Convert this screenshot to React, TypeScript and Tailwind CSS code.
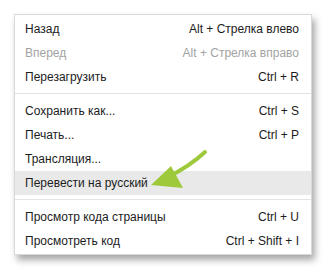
type Item = { label: string; shortcut?: string; disabled?: boolean; active?: boolean };

const groups: Item[][] = [
  [
    { label: "Назад", shortcut: "Alt + Стрелка влево" },
    { label: "Вперед", shortcut: "Alt + Стрелка вправо", disabled: true },
    { label: "Перезагрузить", shortcut: "Ctrl + R" },
  ],
  [
    { label: "Сохранить как...", shortcut: "Ctrl + S" },
    { label: "Печать...", shortcut: "Ctrl + P" },
    { label: "Трансляция..." },
    { label: "Перевести на русский", active: true },
  ],
  [
    { label: "Просмотр кода страницы", shortcut: "Ctrl + U" },
    { label: "Просмотреть код", shortcut: "Ctrl + Shift + I" },
  ],
];

const Row = ({ item }: { item: Item }) => (
  <div
    className={
      "flex h-6 items-center justify-between pl-[10px] pr-[12px] " +
      (item.active ? "bg-[#e9e9e9] " : "") +
      (item.disabled ? "text-[#a3a3a3]" : "text-[#1c1c1c]")
    }
  >
    <span>{item.label}</span>
    {item.shortcut && <span>{item.shortcut}</span>}
  </div>
);

const Arrow = () => (
  <svg className="pointer-events-none absolute left-0 top-0" width="326" height="271">
    <path
      d="M205 152 Q190 166 168 177"
      fill="none"
      stroke="#9dc93b"
      strokeWidth="4"
      strokeLinecap="round"
    />
    <polygon points="151,185 171,166 183,188" fill="#9dc93b" />
  </svg>
);

export default function App() {
  return (
    <div
      className="relative h-[271px] w-[326px] bg-white pl-[14px] pt-[14px]"
      style={{ fontFamily: '"Liberation Sans", Arial, sans-serif' }}
    >
      <div className="w-[298px] border border-[#d9d9d9] bg-white pb-[1px] pt-[2px] text-[12px] shadow-[3px_5px_7px_rgba(0,0,0,0.35)]">
        {groups.map((g, i) => (
          <div key={i}>
            {i > 0 && <div className="mb-[5px] mt-[4px] h-px bg-[#e3e3e3]" />}
            {g.map((it) => (
              <Row key={it.label} item={it} />
            ))}
          </div>
        ))}
      </div>
      <Arrow />
    </div>
  );
}
